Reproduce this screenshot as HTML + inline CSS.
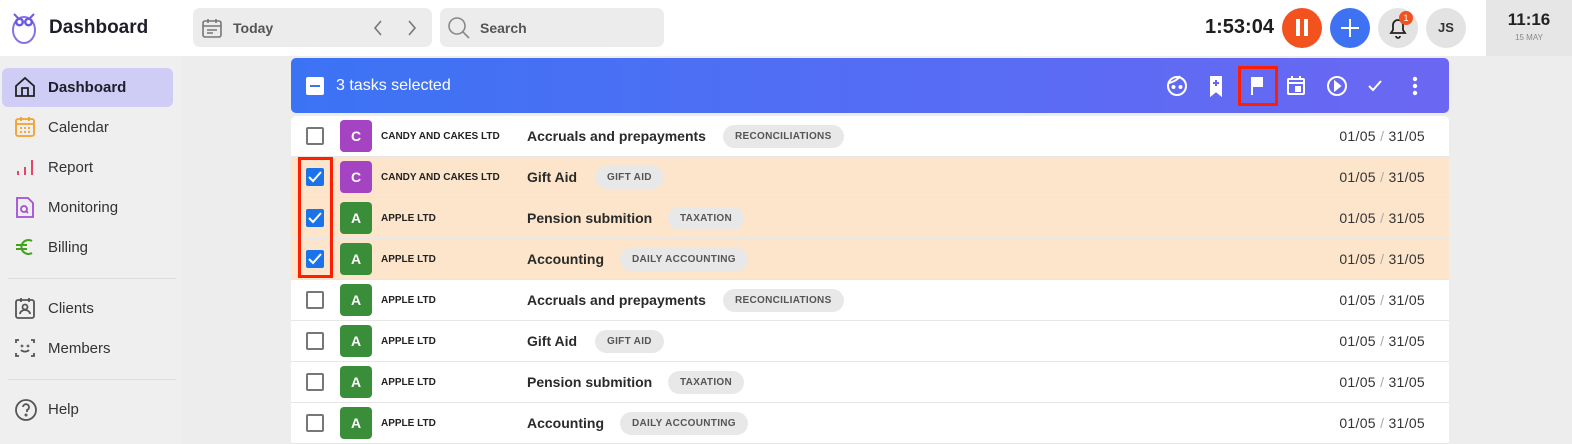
<!DOCTYPE html>
<html><head><style>
*{box-sizing:border-box;margin:0;padding:0}
body{width:1572px;height:444px;overflow:hidden;background:#ededed;font-family:"Liberation Sans",sans-serif;position:relative;color:#222}
.abs{position:absolute}
.top{left:0;top:0;width:1486px;height:56px;background:#fff}
.clock{left:1486px;top:0;width:86px;height:56px;background:#e6e6e6;text-align:center}
.pill{background:#ececec;border-radius:7px;height:39px;top:8px}
.nav{left:14px;width:160px;height:30px;font-size:15px;color:#333}
.nav svg{position:absolute;left:0;top:3px}
.nav span{position:absolute;left:34px;top:6px}
.bar{left:291px;top:58px;width:1158px;height:55px;border-radius:5px;background:linear-gradient(90deg,#3c73f4,#6b67f3)}
.tbl{left:291px;top:116px;width:1158px;height:328px;background:#fff;border-radius:5px 5px 0 0}
.row{position:absolute;left:0;width:1158px;height:41px;border-bottom:1px solid #e6e6e6}
.sel{background:#fde5cc}
.cb{position:absolute;left:15px;top:11px;width:18px;height:18px;border:2px solid #777;border-radius:2px;background:#fff}
.cbc{border:none;background:#1a73e8}
.cbc svg{position:absolute;left:2px;top:3px}
.av{position:absolute;left:49px;top:4px;width:32px;height:32px;border-radius:4px;color:#fff;font-weight:bold;font-size:14px;text-align:center;line-height:32px}
.co{position:absolute;left:90px;top:15px;font-size:10px;font-weight:bold;color:#222}
.tk{position:absolute;left:236px;top:12px;font-size:14px;font-weight:bold;color:#2a2a2a}
.tag{position:absolute;top:9px;height:23px;border-radius:12px;background:#e8e8e8;font-size:10px;font-weight:bold;color:#555;line-height:23px;padding:0 12px;letter-spacing:.3px}
.dt{position:absolute;right:24px;top:12px;font-size:14px;color:#333;letter-spacing:.3px}
.dt i{color:#aaa;font-style:normal}
.circ{top:8px;width:40px;height:40px;border-radius:50%}
</style></head><body>
<div class="abs top"></div>
<div class="abs clock"><div style="font-size:17px;font-weight:bold;margin-top:10px;color:#222">11:16</div><div style="font-size:8px;color:#888;margin-top:3px">15 MAY</div></div>
<svg class="abs" style="left:11px;top:10px" width="26" height="34" viewBox="0 0 26 34"><ellipse cx="13" cy="20" rx="11" ry="13" fill="#fff" stroke="#8a6fe8" stroke-width="2"/><circle cx="8.5" cy="12" r="4.5" fill="#6a5ae0"/><circle cx="17.5" cy="12" r="4.5" fill="#6a5ae0"/><circle cx="8.5" cy="12" r="2" fill="#fff"/><circle cx="17.5" cy="12" r="2" fill="#fff"/><path d="M3 4l4 4M23 4l-4 4" stroke="#6a5ae0" stroke-width="2"/></svg>
<div class="abs" style="left:49px;top:17px;font-size:19px;font-weight:bold;color:#1e1e2a">Dashboard</div>
<div class="abs pill" style="left:193px;width:239px"></div>
<svg class="abs" style="left:201px;top:17px" width="22" height="22" viewBox="0 0 22 22" fill="none" stroke="#777" stroke-width="1.6"><rect x="2" y="4" width="18" height="16" rx="2"/><path d="M2 9h18M7 2v4M15 2v4M6 13h10M6 16h6"/></svg>
<div class="abs" style="left:233px;top:20px;font-size:14px;font-weight:bold;color:#555">Today</div>
<svg class="abs" style="left:370px;top:19px" width="50" height="18" viewBox="0 0 50 18" fill="none" stroke="#777" stroke-width="1.6"><path d="M11 2l-6 7 6 7M39 2l6 7-6 7"/></svg>
<div class="abs pill" style="left:440px;width:224px"></div>
<svg class="abs" style="left:447px;top:16px" width="24" height="24" viewBox="0 0 24 24" fill="none" stroke="#888" stroke-width="1.6"><circle cx="10" cy="10" r="8"/><path d="M16 16l6 6"/></svg>
<div class="abs" style="left:480px;top:20px;font-size:14px;font-weight:bold;color:#555">Search</div>
<div class="abs" style="left:1205px;top:16px;font-size:20px;font-weight:bold;color:#1e1e1e">1:53:04</div>
<div class="abs circ" style="left:1282px;background:#f2521e"></div>
<div class="abs" style="left:1296px;top:19px;width:4px;height:17px;background:#fff"></div><div class="abs" style="left:1304px;top:19px;width:4px;height:17px;background:#fff"></div>
<div class="abs circ" style="left:1330px;background:#3f72f3"></div>
<div class="abs" style="left:1341px;top:27px;width:18px;height:2px;background:#fff"></div><div class="abs" style="left:1349px;top:19px;width:2px;height:18px;background:#fff"></div>
<div class="abs circ" style="left:1378px;background:#e3e3e3"></div>
<svg class="abs" style="left:1387px;top:16px" width="22" height="24" viewBox="0 0 22 24" fill="none" stroke="#222" stroke-width="1.8"><path d="M4 17h14l-2-3v-5a5 5 0 0 0-10 0v5z"/><path d="M9 20a2 2 0 0 0 4 0"/></svg>
<div class="abs" style="left:1399px;top:11px;width:14px;height:14px;border-radius:50%;background:#f2521e;color:#fff;font-size:9px;text-align:center;line-height:14px">1</div>
<div class="abs circ" style="left:1426px;background:#e3e3e3;font-size:13px;font-weight:bold;text-align:center;line-height:40px;color:#333">JS</div>

<div class="abs" style="left:0;top:56px;width:182px;height:388px;background:#efefef"></div>
<div class="abs" style="left:2px;top:68px;width:171px;height:39px;border-radius:6px;background:#cfcdf5"></div>
<div class="abs nav" style="top:73px"><svg width="22" height="22" viewBox="0 0 22 22" fill="none" stroke="#222" stroke-width="1.8"><path d="M2 10L11 2l9 8v10H2z"/><path d="M8 20v-8h6v8"/></svg><span style="font-weight:bold;color:#1e1e2a">Dashboard</span></div>
<div class="abs nav" style="top:113px"><svg width="22" height="22" viewBox="0 0 22 22" fill="none" stroke="#f2a12c" stroke-width="1.8"><rect x="2" y="3" width="18" height="17" rx="2"/><path d="M2 8h18M7 1v4M15 1v4M6 12h2M10 12h2M14 12h2M6 16h2M10 16h2M14 16h2"/></svg><span>Calendar</span></div>
<div class="abs nav" style="top:153px"><svg width="22" height="22" viewBox="0 0 22 22" stroke="#e8436a" stroke-width="2"><path d="M4 19v-4M11 19v-8M18 19V4"/></svg><span>Report</span></div>
<div class="abs nav" style="top:193px"><svg width="22" height="22" viewBox="0 0 22 22" fill="none" stroke="#a34fd8" stroke-width="1.8"><path d="M3 2h11l5 5v14H3z"/><circle cx="10" cy="13" r="3"/><path d="M12 15l2 2"/></svg><span>Monitoring</span></div>
<div class="abs nav" style="top:233px"><svg width="22" height="22" viewBox="0 0 22 22" fill="none" stroke="#43a21a" stroke-width="2"><path d="M18 5a7 7 0 1 0 0 12M2 9h11M2 13h11"/></svg><span>Billing</span></div>
<div class="abs" style="left:8px;top:278px;width:168px;height:1px;background:#ddd"></div>
<div class="abs nav" style="top:294px"><svg width="22" height="22" viewBox="0 0 22 22" fill="none" stroke="#555" stroke-width="1.8"><rect x="2" y="3" width="18" height="18" rx="2"/><path d="M7 1v4M15 1v4"/><circle cx="11" cy="10" r="2.5"/><path d="M6 17a5 4 0 0 1 10 0"/></svg><span>Clients</span></div>
<div class="abs nav" style="top:334px"><svg width="22" height="22" viewBox="0 0 22 22" fill="none" stroke="#555" stroke-width="1.8"><path d="M2 6V3h3M17 3h3v3M2 16v3h3M17 19h3v-3M7 13a5 4 0 0 0 8 0"/><circle cx="8" cy="9" r=".5"/><circle cx="14" cy="9" r=".5"/></svg><span>Members</span></div>
<div class="abs" style="left:8px;top:379px;width:168px;height:1px;background:#ddd"></div>
<div class="abs nav" style="top:395px"><svg width="24" height="24" viewBox="0 0 24 24" fill="none" stroke="#555" stroke-width="1.8"><circle cx="12" cy="12" r="10"/><path d="M9 9a3 3 0 1 1 4 3v2"/><circle cx="12" cy="17" r=".6"/></svg><span>Help</span></div>

<div class="abs bar"></div>
<div class="abs" style="left:306px;top:77px;width:18px;height:18px;background:#fff;border-radius:2px"></div>
<div class="abs" style="left:310px;top:85px;width:10px;height:2px;background:#3c73f4"></div>
<div class="abs" style="left:336px;top:77px;font-size:16px;color:#fff">3 tasks selected</div>
<svg class="abs" style="left:1160px;top:70px" width="270" height="32" viewBox="0 0 270 32" fill="none" stroke="#fff" stroke-width="2">
<circle cx="17" cy="16" r="9"/><path d="M9 13q8-2 11-7" /><circle cx="13.5" cy="17" r="1" fill="#fff"/><circle cx="20.5" cy="17" r="1" fill="#fff"/>
<path d="M51 7h10v18l-5-4-5 4z" fill="#fff"/><path d="M56 10v6M53 13h6" stroke="#6b67f3"/>
<path d="M92 7v18M92 8h10v8H92" fill="#fff"/>
<rect x="128" y="9" width="16" height="15" rx="1"/><path d="M128 13h16M132 6v4M140 6v4"/><rect x="136" y="17" width="4" height="4" fill="#fff"/>
<circle cx="177" cy="16" r="9"/><path d="M175 12v8l5-4z" fill="#fff"/>
<path d="M209 16l4 4 8-9"/>
<circle cx="255" cy="9" r="1.2" fill="#fff"/><circle cx="255" cy="16" r="1.2" fill="#fff"/><circle cx="255" cy="23" r="1.2" fill="#fff"/>
</svg>
<div class="abs" style="left:1238px;top:66px;width:40px;height:40px;border:3px solid #ff1f00"></div>

<div class="abs tbl">
<div class="row" style="top:0"><div class="cb"></div><div class="av" style="background:#a544c2">C</div><div class="co">CANDY AND CAKES LTD</div><div class="tk">Accruals and prepayments</div><div class="tag" style="left:432px">RECONCILIATIONS</div><div class="dt">01/05 <i>/</i> 31/05</div></div>
<div class="row sel" style="top:41px"><div class="cb cbc"><svg width="14" height="12" viewBox="0 0 14 12" fill="none" stroke="#fff" stroke-width="2"><path d="M1 6l4 4 8-9"/></svg></div><div class="av" style="background:#a544c2">C</div><div class="co">CANDY AND CAKES LTD</div><div class="tk">Gift Aid</div><div class="tag" style="left:304px">GIFT AID</div><div class="dt">01/05 <i>/</i> 31/05</div></div>
<div class="row sel" style="top:82px"><div class="cb cbc"><svg width="14" height="12" viewBox="0 0 14 12" fill="none" stroke="#fff" stroke-width="2"><path d="M1 6l4 4 8-9"/></svg></div><div class="av" style="background:#3a8e3a">A</div><div class="co">APPLE LTD</div><div class="tk">Pension submition</div><div class="tag" style="left:377px">TAXATION</div><div class="dt">01/05 <i>/</i> 31/05</div></div>
<div class="row sel" style="top:123px"><div class="cb cbc"><svg width="14" height="12" viewBox="0 0 14 12" fill="none" stroke="#fff" stroke-width="2"><path d="M1 6l4 4 8-9"/></svg></div><div class="av" style="background:#3a8e3a">A</div><div class="co">APPLE LTD</div><div class="tk">Accounting</div><div class="tag" style="left:329px">DAILY ACCOUNTING</div><div class="dt">01/05 <i>/</i> 31/05</div></div>
<div class="row" style="top:164px"><div class="cb"></div><div class="av" style="background:#3a8e3a">A</div><div class="co">APPLE LTD</div><div class="tk">Accruals and prepayments</div><div class="tag" style="left:432px">RECONCILIATIONS</div><div class="dt">01/05 <i>/</i> 31/05</div></div>
<div class="row" style="top:205px"><div class="cb"></div><div class="av" style="background:#3a8e3a">A</div><div class="co">APPLE LTD</div><div class="tk">Gift Aid</div><div class="tag" style="left:304px">GIFT AID</div><div class="dt">01/05 <i>/</i> 31/05</div></div>
<div class="row" style="top:246px"><div class="cb"></div><div class="av" style="background:#3a8e3a">A</div><div class="co">APPLE LTD</div><div class="tk">Pension submition</div><div class="tag" style="left:377px">TAXATION</div><div class="dt">01/05 <i>/</i> 31/05</div></div>
<div class="row" style="top:287px"><div class="cb"></div><div class="av" style="background:#3a8e3a">A</div><div class="co">APPLE LTD</div><div class="tk">Accounting</div><div class="tag" style="left:329px">DAILY ACCOUNTING</div><div class="dt">01/05 <i>/</i> 31/05</div></div>
</div>
<div class="abs" style="left:298px;top:157px;width:35px;height:121px;border:3px solid #ff1f00"></div>
</body></html>
